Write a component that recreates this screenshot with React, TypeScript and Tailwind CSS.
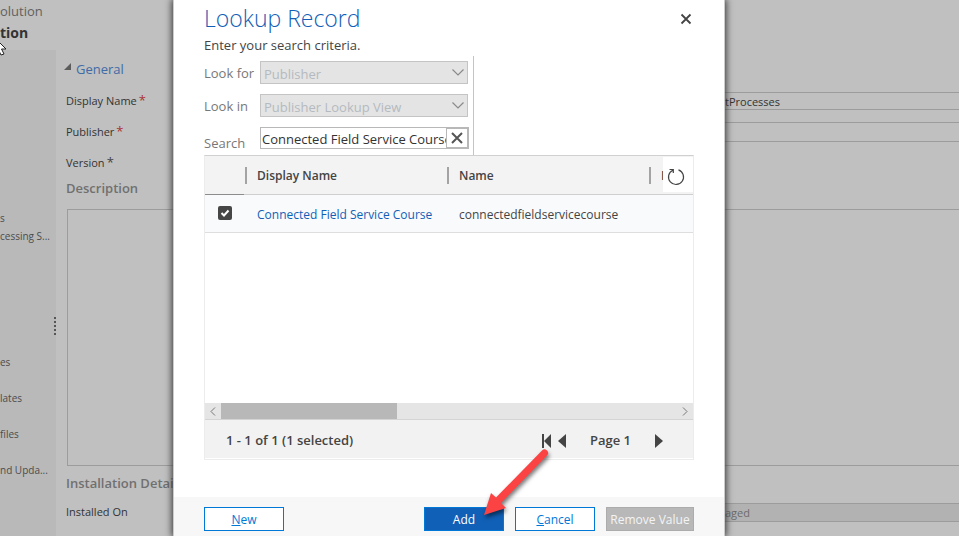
import type { ReactNode } from "react";

const navItems = [
  { text: "s", gap: "mt-[159px]" },
  { text: "cessing S...", gap: "mt-0" },
  { text: "es", gap: "mt-[108px]" },
  { text: "lates", gap: "mt-[18px]" },
  { text: "files", gap: "mt-[18px]" },
  { text: "nd Upda...", gap: "mt-[18px]" },
];

function Sidebar() {
  return (
    <aside className="flex w-14 shrink-0 flex-col bg-[#b9b9b9]">
      <header className="h-[50px] bg-[#c0c0c0] whitespace-nowrap">
        <p className="h-[22px] text-[13px] leading-[22px] text-[#606060]">olution</p>
        <h1 className="text-[14px] leading-[22px] font-bold text-[#333]">tion</h1>
      </header>
      <nav className="flex flex-col text-[10px] leading-[18px] whitespace-nowrap text-[#4c4c4c]">
        {navItems.map((item) => (
          <a key={item.text} href="#" className={item.gap}>
            {item.text}
          </a>
        ))}
      </nav>
    </aside>
  );
}

function FieldLabel({ id, children, required }: { id: string; children: ReactNode; required?: string }) {
  return (
    <label htmlFor={id} className="w-[113px] shrink-0 text-[11px] text-[#333]">
      {children}
      {required && <span className={`ml-0.5 text-[13px] leading-none ${required}`}>*</span>}
    </label>
  );
}

function SolutionForm() {
  return (
    <main className="flex min-w-0 flex-1 flex-col bg-[#c0c0c0] pl-[10px]">
      <h2 className="mt-[60px] flex h-5 items-center gap-1 text-[13px] text-[#3f6ba6]">
        <svg width="8" height="8" viewBox="0 0 8 8" className="-ml-0.5 mb-1.5" fill="#5c5c5c">
          <path d="M7 0V7H0Z" />
        </svg>
        General
      </h2>
      <div className="mt-3 flex h-[18px] items-center">
        <FieldLabel id="display" required="text-[#a33]">Display Name</FieldLabel>
        <input id="display" defaultValue="tProcesses" className="h-full min-w-0 flex-1 border-y border-[#9c9c9c] pl-[546px] text-[11px] text-[#333]" />
      </div>
      <div className="mt-3 flex h-5 items-center">
        <FieldLabel id="publisher" required="text-[#a33]">Publisher</FieldLabel>
        <input id="publisher" className="h-full min-w-0 flex-1 border-y border-[#9c9c9c]" />
      </div>
      <div className="mt-3 flex h-[18px] items-center">
        <FieldLabel id="version" required="text-[#444]">Version</FieldLabel>
        <input id="version" className="h-full w-20" />
      </div>
      <label htmlFor="description" className="mt-1.5 h-5 text-[13px] leading-5 font-semibold text-[#707070]">
        Description
      </label>
      <textarea id="description" className="mt-[11px] ml-px h-[257px] resize-none border border-r-0 border-[#9c9c9c]" />
      <h2 className="mt-[7px] h-5 text-[13px] leading-5 font-semibold text-[#707070]">Installation Details</h2>
      <div className="mt-2.5 flex h-[19px] items-center">
        <FieldLabel id="installed">Installed On</FieldLabel>
        <input id="installed" readOnly value="aged" className="h-full min-w-0 flex-1 border-y border-[#9c9c9c] bg-[#b2b2b2] pl-[546px] text-[11px] text-[#6c6c6c]" />
      </div>
    </main>
  );
}

function LookupSelect({ id, label, value }: { id: string; label: string; value: string }) {
  return (
    <div className="flex h-[23px] items-center">
      <label htmlFor={id} className="w-14 shrink-0 pt-[3px]">{label}</label>
      <div className="relative h-full w-52">
        <select id={id} disabled className="h-full w-full appearance-none border border-[#c4c4c4] bg-[#e4e4e4] pt-[3px] pl-[3px] text-[#b4bac0] opacity-100">
          <option>{value}</option>
        </select>
        <svg width="12" height="7" viewBox="0 0 12 7" className="pointer-events-none absolute top-2 right-1" fill="none" stroke="#8a8a8a" strokeWidth="1.2">
          <path d="M.5.5 6 6 11.5.5" />
        </svg>
      </div>
    </div>
  );
}

function HeaderCell({ children }: { children: ReactNode }) {
  return (
    <th className="p-0 pt-0.5 text-left font-semibold">
      <div className="ml-px flex h-[17px] items-center border-l-2 border-[#a3a3a3] pl-2.5">{children}</div>
    </th>
  );
}

function RecordGrid() {
  return (
    <section className="relative mx-[31px] flex flex-1 flex-col border border-t-[#d0d0d0] border-[#ececec]">
      <div className="flex-1 overflow-hidden">
        <table className="w-full table-fixed border-collapse text-[12px] text-[#444]">
          <colgroup>
            <col className="w-[39px]" />
            <col className="w-[202px]" />
            <col className="w-[202px]" />
            <col />
          </colgroup>
          <thead>
            <tr className="h-[38px] border-b border-[#cfcfcf] bg-[#f3f3f3]">
              <td className="border-b border-[#8c8c8c]" />
              <HeaderCell>Display Name</HeaderCell>
              <HeaderCell>Name</HeaderCell>
              <HeaderCell>I</HeaderCell>
            </tr>
          </thead>
          <tbody>
            <tr className="h-[38px] border-b border-[#dedede] bg-[#f8fafc]">
              <td className="p-0 pl-[13px]">
                <label className="relative block size-3.5">
                  <input type="checkbox" defaultChecked aria-label="Select record" className="block size-3.5 appearance-none rounded-xs bg-[#464646]" />
                  <svg viewBox="0 0 14 14" className="pointer-events-none absolute inset-0" fill="none" stroke="#fff" strokeWidth="2">
                    <path d="m3.5 7 2.5 2.5 4.5-5" />
                  </svg>
                </label>
              </td>
              <td className="p-0 pt-[3px] pl-[13px] whitespace-nowrap">
                <a href="#" className="text-[#1160b7]">Connected Field Service Course</a>
              </td>
              <td className="p-0 pt-[3px] pl-[13px]">connectedfieldservicecourse</td>
              <td />
            </tr>
          </tbody>
        </table>
      </div>
      <button aria-label="Refresh" className="absolute top-px right-0 flex h-[35px] w-[30px] items-center justify-center bg-white pr-1 pt-1">
        <svg width="18" height="18" viewBox="0 0 18 18" fill="none" stroke="#444" strokeWidth="1.2">
          <path d="M11.500 1.900A7.500 7.500 0 1 1 5.800 2.200M2.500 1.500H6.300V5" />
        </svg>
      </button>
      <div className="flex h-4 items-center bg-[#e5e5e5]">
        <span className="flex w-4 justify-center">
          <svg width="6" height="9" viewBox="0 0 6 9" fill="none" stroke="#777"><path d="M5 .5 1 4.5l4 4" /></svg>
        </span>
        <span className="h-full w-44 bg-[#b8b8b8]" />
        <span className="ml-auto flex w-4 justify-center">
          <svg width="6" height="9" viewBox="0 0 6 9" fill="none" stroke="#777"><path d="m1 .5 4 4-4 4" /></svg>
        </span>
      </div>
      <div className="mb-px flex h-[39px] items-center border-t border-[#d4d4d4] bg-[#f2f2f2] pt-[3px] pr-[30px] pl-[21px] text-[13px] font-semibold text-[#444]">
        <span className="flex-1">1 - 1 of 1 (1 selected)</span>
        <button aria-label="First page">
          <svg width="11" height="14" viewBox="0 0 11 14" fill="#444"><path d="M1 0h2v14H1zM10 0v14L3 7z" /></svg>
        </button>
        <button aria-label="Previous page" className="ml-1.5">
          <svg width="8" height="14" viewBox="0 0 8 14" fill="#444"><path d="M8 0v14L0 7z" /></svg>
        </button>
        <span className="ml-6">Page 1</span>
        <button aria-label="Next page" className="ml-6">
          <svg width="8" height="14" viewBox="0 0 8 14" fill="#444"><path d="M0 0v14l8-7z" /></svg>
        </button>
      </div>
    </section>
  );
}

function LookupDialog() {
  return (
    <div role="dialog" aria-label="Lookup Record" className="absolute inset-y-0 left-[173px] flex w-[552px] flex-col border-x border-[#ccc] bg-white shadow-[0_0_7px_1px_#333]">
      <header className="flex justify-between pr-8 pl-[30px]">
        <div>
          <h2 className="h-9 text-[23px] leading-9 font-light text-[#1160b7]">Lookup Record</h2>
          <p className="h-5 text-[13px] leading-[18px] text-[#444]">Enter your search criteria.</p>
        </div>
        <button aria-label="Close" className="flex h-[38px] items-center">
          <svg width="12" height="12" viewBox="0 0 12 12" fill="none" stroke="#444" strokeWidth="1.8"><path d="m1.500 1.500 9 9m0-9-9 9" /></svg>
        </button>
      </header>
      <div className="ml-[30px] flex w-[270px] flex-col gap-2.5 border-r border-[#c4c4c4] pt-[5px] pb-1.5 text-[13px] text-[#777]">
        <LookupSelect id="lookfor" label="Look for" value="Publisher" />
        <LookupSelect id="lookin" label="Look in" value="Publisher Lookup View" />
        <div className="flex h-[22px]">
          <label htmlFor="search" className="w-14 shrink-0 pt-[7px]">Search</label>
          <div className="flex w-[209px] border border-[#b8b8b8]">
            <input id="search" defaultValue="Connected Field Service Course" className="min-w-0 flex-1 pt-[3px] pl-px text-[#333]" />
            <button aria-label="Clear search" className="flex w-[22px] items-center justify-center border border-[#b8b8b8]">
              <svg width="12" height="12" viewBox="0 0 12 12" fill="none" stroke="#555" strokeWidth="2"><path d="m1 1 10 10M11 1 1 11" /></svg>
            </button>
          </div>
        </div>
      </div>
      <div className="-mx-px flex flex-1 flex-col">
        <RecordGrid />
      </div>
      <footer className="mt-[37px] flex h-[39px] items-start gap-[11px] bg-[#f7f7f7] px-[30px] pt-[10px] text-[12px]">
        <button className="mr-auto h-6 w-20 border border-[#0078d7] bg-white pt-0.5 text-[#0078d7]"><u>N</u>ew</button>
        <button className="h-6 w-20 border border-[#0078d7] bg-[#1160b7] pt-0.5 text-white">Add</button>
        <button className="h-6 w-20 border border-[#0078d7] bg-white pt-0.5 text-[#0078d7]"><u>C</u>ancel</button>
        <button disabled className="h-6 w-[88px] border border-[#acacac] bg-[#b8b8b8] pt-0.5 whitespace-nowrap text-[#f4f4f4]">Remove Value</button>
      </footer>
      <svg width="80" height="80" viewBox="0 0 80 80" className="pointer-events-none absolute top-[445px] left-[299px] drop-shadow-[1px_3px_2px_#0008]" fill="#fb4343">
        <path d="M11 70 18 48l5 4.500L69 5.500a3.500 3.500 0 0 1 5 5L28 58l5 5Z" />
      </svg>
    </div>
  );
}

export default function App() {
  return (
    <div className="relative flex min-h-screen overflow-hidden bg-[#c0c0c0] font-['Open_Sans','Noto_Sans',sans-serif]">
      <Sidebar />
      <SolutionForm />
      <div aria-hidden="true" className="absolute top-[317px] left-[54px] flex flex-col gap-0.5">
        {[0, 1, 2, 3, 4].map((dot) => (
          <span key={dot} className="size-0.5 bg-[#555]" />
        ))}
      </div>
      <LookupDialog />
      <svg width="12" height="18" viewBox="0 0 12 18" className="absolute top-[38px] -left-1.5" fill="#fff" stroke="#222">
        <path d="M1 0v15l3.500-3 2.500 5 3-1-2.500-5H12Z" />
      </svg>
    </div>
  );
}
